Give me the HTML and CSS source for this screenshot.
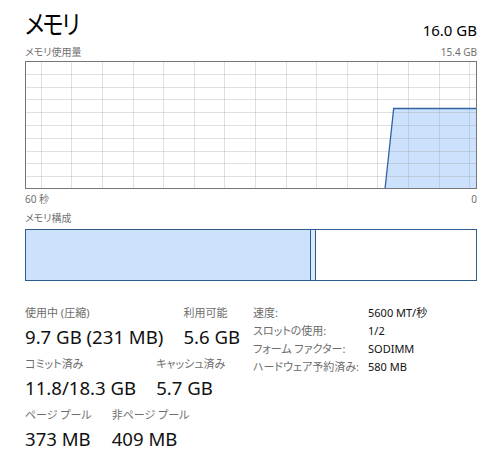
FILE: index.html
```html
<!DOCTYPE html>
<html lang="ja">
<head>
    <meta charset="UTF-8">
    <title>メモリ</title>
    <link rel="stylesheet" href="styles.css">
</head>
<body>
    <div class="panel">
        <div class="header">
            <h1 class="title">メモリ</h1>
            <div class="total">16.0 GB</div>
        </div>

        <div class="chart-head">
            <span>メモリ使用量</span>
            <span>15.4 GB</span>
        </div>
        <svg class="chart" width="452" height="128" viewBox="0 0 452 128">
            <!-- 使用量の面 -->
            <polygon class="area" points="360,128 368.7,47.5 452,47.5 452,128"/>
            <!-- グリッド -->
            <path class="grid" d="M16.5 0V128M46.5 0V128M77.5 0V128M108.5 0V128M138.5 0V128M169.5 0V128M199.5 0V128M230.5 0V128M261.5 0V128M291.5 0V128M322.5 0V128M352.5 0V128M383.5 0V128M414.5 0V128M444.5 0V128
                M0 13.5H452M0 26.5H452M0 38.5H452M0 51.5H452M0 64.5H452M0 77.5H452M0 90.5H452M0 102.5H452M0 115.5H452"/>
            <polyline class="line" points="360,128 368.7,47.5 452,47.5"/>
            <rect class="frame" x="0.5" y="0.5" width="451" height="127"/>
        </svg>
        <div class="axis">
            <span>60 秒</span>
            <span>0</span>
        </div>

        <div class="section-label">メモリ構成</div>
        <div class="composition">
            <div class="seg seg-used"></div>
            <div class="seg seg-modified"></div>
            <div class="seg seg-free"></div>
        </div>

        <div class="details">
            <div class="stats">
                <div class="stat-row">
                    <div class="stat">
                        <div class="label">使用中 (圧縮)</div>
                        <div class="value">9.7 GB (231 MB)</div>
                    </div>
                    <div class="stat">
                        <div class="label">利用可能</div>
                        <div class="value">5.6 GB</div>
                    </div>
                </div>
                <div class="stat-row">
                    <div class="stat">
                        <div class="label">コミット済み</div>
                        <div class="value">11.8/18.3 GB</div>
                    </div>
                    <div class="stat">
                        <div class="label">キャッシュ済み</div>
                        <div class="value">5.7 GB</div>
                    </div>
                </div>
                <div class="stat-row">
                    <div class="stat">
                        <div class="label">ページ プール</div>
                        <div class="value">373 MB</div>
                    </div>
                    <div class="stat">
                        <div class="label">非ページ プール</div>
                        <div class="value">409 MB</div>
                    </div>
                </div>
            </div>

            <dl class="specs">
                <dt>速度:</dt><dd>5600 MT/秒</dd>
                <dt>スロットの使用:</dt><dd>1/2</dd>
                <dt>フォーム ファクター:</dt><dd>SODIMM</dd>
                <dt>ハードウェア予約済み:</dt><dd>580 MB</dd>
            </dl>
        </div>
    </div>
</body>
</html>
```
FILE: styles.css
```css
body {
    margin: 0;
    padding: 0;
    background: #fff;
    font-family: "Noto Sans", "Noto Sans CJK JP", sans-serif;
    font-feature-settings: "palt";
    color: #000;
}
.panel {
    width: 452px;
    padding: 6px 0 0 25px;
}
.header {
    display: flex;
    justify-content: space-between;
    align-items: flex-end;
    height: 39px;
}
/* 細めのカタカナに近づける */
.title {
    margin: 0;
    font-size: 26px;
    font-weight: normal;
    line-height: 36px;
    height: 39px;
    letter-spacing: -2px;
    transform: scaleX(0.85);
    transform-origin: left center;
}
.total {
    font-size: 15px;
    line-height: 20px;
    margin-bottom: 5px;
}
.chart-head, .axis {
    display: flex;
    justify-content: space-between;
    font-size: 10px;
    color: #707070;
}
.chart-head {
    line-height: 14px;
    margin-bottom: 2px;
}
.chart {
    display: block;
}
.chart .area {
    fill: #cce1fb;
}
.chart .grid {
    fill: none;
    stroke: rgba(160, 160, 160, 0.32);
    stroke-width: 1;
}
.chart .line {
    fill: none;
    stroke: #2f63a6;
    stroke-width: 1.3;
}
.chart .frame {
    fill: none;
    stroke: #767676;
    stroke-width: 1;
}
.axis {
    line-height: 18px;
    margin-top: 1px;
}
.section-label {
    font-size: 10px;
    color: #707070;
    line-height: 16px;
    margin-top: 2px;
}
.composition {
    display: flex;
    height: 50px;
    margin-top: 3px;
    border: 1px solid #2c5d8f;
}
.seg-used {
    width: 284px;
    background: #cce1fb;
    border-right: 1px solid #2c5d8f;
}
.seg-modified {
    width: 4px;
    background: #dbe9fb;
    border-right: 1px solid #2c5d8f;
}
.seg-free {
    flex: 1;
}
.details {
    display: flex;
    margin-top: 23px;
}
.stats {
    width: 228px;
}
.stat-row {
    display: flex;
    gap: 20px;
    margin-bottom: 5px;
}
.label {
    font-size: 11px;
    line-height: 18px;
    color: #6d6d6d;
}
.value {
    font-size: 18.6px;
    line-height: 26px;
    margin-top: 2px;
    color: #111;
}
.specs {
    display: grid;
    grid-template-columns: 115px auto;
    grid-auto-rows: 18px;
    margin: 0;
    font-size: 11px;
    line-height: 18px;
}
.specs dt {
    color: #6d6d6d;
}
.specs dd {
    margin: 0;
    color: #111;
}
```
